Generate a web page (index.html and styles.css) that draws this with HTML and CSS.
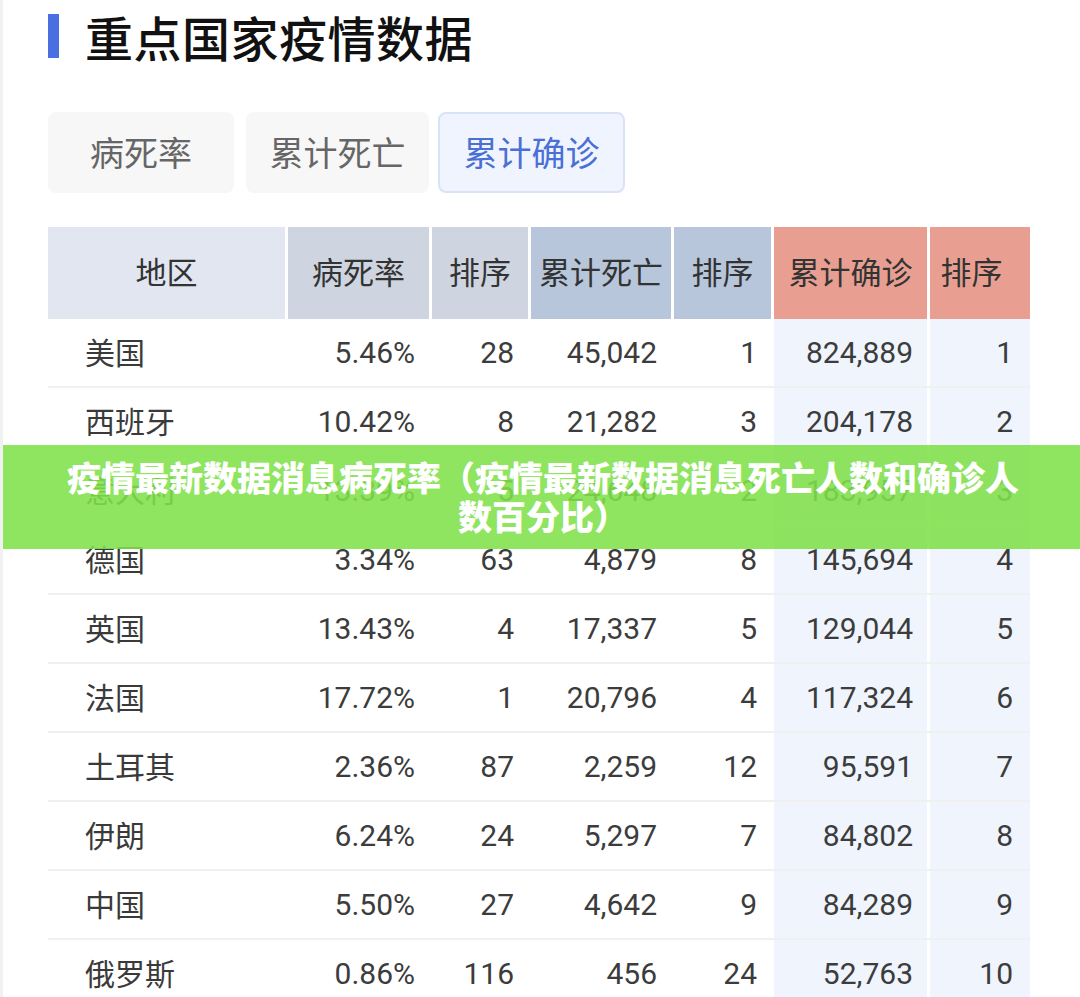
FILE: index.html
```html
<!DOCTYPE html>
<html lang="zh-CN">
<head>
<meta charset="utf-8">
<title>重点国家疫情数据</title>
<link rel="stylesheet" href="styles.css">
</head>
<body>
<div class="page">
  <div class="title-row">
    <span class="title-bar"></span>
    <h1 class="title">重点国家疫情数据</h1>
  </div>

  <div class="tabs">
    <div class="tab tab-1">病死率</div>
    <div class="tab tab-2">累计死亡</div>
    <div class="tab tab-3 active">累计确诊</div>
  </div>

  <div class="table">
    <div class="row head">
      <div class="cell h-region">地区</div>
      <div class="cell h-gray">病死率</div>
      <div class="cell h-gray">排序</div>
      <div class="cell h-blue">累计死亡</div>
      <div class="cell h-blue">排序</div>
      <div class="cell h-red">累计确诊</div>
      <div class="cell h-red">排序</div>
    </div>
    <div class="row"><div class="cell name">美国</div><div class="cell num">5.46%</div><div class="cell num">28</div><div class="cell num">45,042</div><div class="cell num">1</div><div class="cell num hl">824,889</div><div class="cell num hl">1</div></div>
    <div class="row"><div class="cell name">西班牙</div><div class="cell num">10.42%</div><div class="cell num">8</div><div class="cell num">21,282</div><div class="cell num">3</div><div class="cell num hl">204,178</div><div class="cell num hl">2</div></div>
    <div class="row"><div class="cell name">意大利</div><div class="cell num">13.39%</div><div class="cell num">5</div><div class="cell num">24,648</div><div class="cell num">2</div><div class="cell num hl">183,957</div><div class="cell num hl">3</div></div>
    <div class="row"><div class="cell name">德国</div><div class="cell num">3.34%</div><div class="cell num">63</div><div class="cell num">4,879</div><div class="cell num">8</div><div class="cell num hl">145,694</div><div class="cell num hl">4</div></div>
    <div class="row"><div class="cell name">英国</div><div class="cell num">13.43%</div><div class="cell num">4</div><div class="cell num">17,337</div><div class="cell num">5</div><div class="cell num hl">129,044</div><div class="cell num hl">5</div></div>
    <div class="row"><div class="cell name">法国</div><div class="cell num">17.72%</div><div class="cell num">1</div><div class="cell num">20,796</div><div class="cell num">4</div><div class="cell num hl">117,324</div><div class="cell num hl">6</div></div>
    <div class="row"><div class="cell name">土耳其</div><div class="cell num">2.36%</div><div class="cell num">87</div><div class="cell num">2,259</div><div class="cell num">12</div><div class="cell num hl">95,591</div><div class="cell num hl">7</div></div>
    <div class="row"><div class="cell name">伊朗</div><div class="cell num">6.24%</div><div class="cell num">24</div><div class="cell num">5,297</div><div class="cell num">7</div><div class="cell num hl">84,802</div><div class="cell num hl">8</div></div>
    <div class="row"><div class="cell name">中国</div><div class="cell num">5.50%</div><div class="cell num">27</div><div class="cell num">4,642</div><div class="cell num">9</div><div class="cell num hl">84,289</div><div class="cell num hl">9</div></div>
    <div class="row"><div class="cell name">俄罗斯</div><div class="cell num">0.86%</div><div class="cell num">116</div><div class="cell num">456</div><div class="cell num">24</div><div class="cell num hl">52,763</div><div class="cell num hl">10</div></div>
  </div>
</div>

<div class="banner">
  <p class="banner-text">疫情最新数据消息病死率（疫情最新数据消息死亡人数和确诊人数百分比）</p>
</div>
</body>
</html>
```

FILE: styles.css
```css
html, body {
  margin: 0;
  padding: 0;
  background: #ffffff;
}

body {
  width: 1080px;
  height: 997px;
  overflow: hidden;
  position: relative;
  font-family: "Noto Sans CJK SC", "Noto Sans", sans-serif;
  color: #333333;
  border-left: 3px solid #f1f1f1;
  box-sizing: border-box;
}

.page {
  padding-left: 45px;
}

.title-row {
  height: 72px;
  display: flex;
  align-items: center;
}

.title-bar {
  display: block;
  width: 11px;
  height: 44px;
  background: #4a6fe0;
  margin-right: 26px;
}

.title {
  margin: 0;
  font-size: 48px;
  font-weight: 500;
  line-height: 72px;
  color: #111111;
  letter-spacing: 0.5px;
}

.tabs {
  display: flex;
  margin-top: 40px;
  height: 81px;
}

.tab {
  display: flex;
  align-items: center;
  justify-content: center;
  height: 81px;
  box-sizing: border-box;
  background: #f7f7f7;
  border-radius: 8px;
  font-size: 34px;
  color: #666666;
  padding-bottom: 2px;
}

.tab-1 {
  width: 186px;
  margin-right: 12px;
}

.tab-2 {
  width: 183px;
  margin-right: 9px;
}

.tab-3 {
  width: 187px;
}

.tab.active {
  background: #eff4fe;
  border: 2px solid #d9e3f7;
  color: #4a6fd5;
}

.table {
  margin-top: 34px;
  width: 982px;
}

.row {
  display: grid;
  grid-template-columns: 237px 141px 96px 140px 97px 153px 100px;
  column-gap: 3px;
  height: 69px;
  box-sizing: border-box;
  border-bottom: 2px solid #f0f0f0;
}

.row.head {
  height: 92px;
  border-bottom: none;
}

.cell {
  display: flex;
  align-items: center;
  font-size: 30px;
  color: #3a3a3a;
}

.head .cell {
  justify-content: center;
  font-size: 31px;
  color: #333333;
  padding-bottom: 6px;
}

.h-region { background: #e1e6f1; }
.h-gray { background: #cfd5e0; }
.h-blue { background: #b7c6da; }
.h-red { background: #e89f91; }

.name {
  padding-left: 37px;
  padding-bottom: 4px;
}

.num {
  justify-content: flex-end;
  padding-right: 14px;
  font-family: Roboto, "Noto Sans CJK SC", sans-serif;
  font-size: 30px;
  color: #3c3c3c;
}

.num.hl {
  background: #eff4fd;
}

.row > .cell:last-child {
  padding-right: 17px;
}

.banner {
  position: absolute;
  left: 0;
  top: 445px;
  width: 1080px;
  height: 104px;
  background: rgba(128, 224, 74, 0.88);
  display: flex;
  align-items: center;
  justify-content: center;
  padding: 0 50px 2px;
  box-sizing: border-box;
}

.banner-text {
  margin: 0;
  font-size: 34px;
  line-height: 39px;
  font-weight: 900;
  color: #ffffff;
  text-align: center;
}
```
